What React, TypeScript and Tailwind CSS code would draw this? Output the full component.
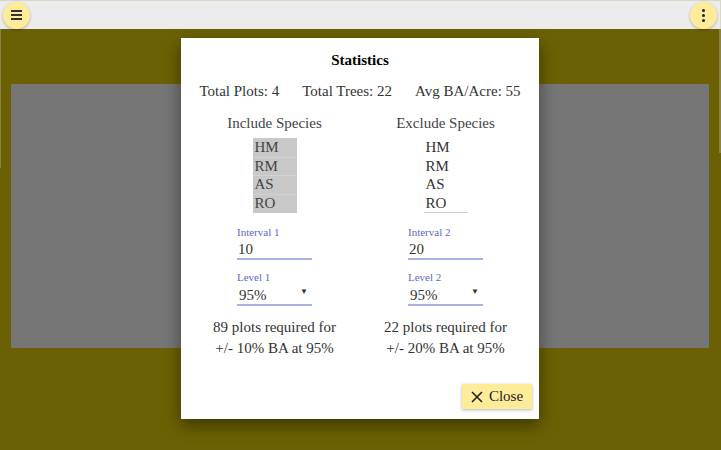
import React from "react";

const species = ["HM", "RM", "AS", "RO"];

type Col = {
  title: string;
  shaded: boolean;
  interval: string;
  intervalLabel: string;
  level: string;
  levelLabel: string;
  plots: number;
  pct: string;
};

const cols: Col[] = [
  { title: "Include Species", shaded: true, interval: "10", intervalLabel: "Interval 1", level: "95%", levelLabel: "Level 1", plots: 89, pct: "10%" },
  { title: "Exclude Species", shaded: false, interval: "20", intervalLabel: "Interval 2", level: "95%", levelLabel: "Level 2", plots: 22, pct: "20%" },
];

const StatColumn: React.FC<{ col: Col }> = ({ col }) => (
  <div className="flex flex-col items-center">
    <div className="text-[15px] leading-[20px] text-[#444]">{col.title}</div>
    <div
      className={
        col.shaded
          ? "mt-[5px] w-[44px] bg-[#c8c8c8] border-b border-[#c8c8c8] text-[#444]"
          : "mt-[5px] w-[44px] border-b border-[#cfcfcf] text-[#333]"
      }
    >
      {species.map((s, i) => (
        <div
          key={s}
          className={
            "pl-[2px] text-[15px] " +
            (col.shaded && i > 0 ? "border-t border-[#d2d2d2] leading-[17.5px]" : "leading-[18.5px]")
          }
        >
          {s}
        </div>
      ))}
    </div>
    <div className="w-[75px] mt-[12px]">
      <div className="text-[11px] leading-[14px] text-[#5c6bc0]">{col.intervalLabel}</div>
      <div className="mt-[1px] text-[15px] leading-[18px] text-[#333] pl-[1px] border-b-2 border-[#a9b2e4]">
        {col.interval}
      </div>
      <div className="mt-[10px] text-[11px] leading-[14px] text-[#5c6bc0]">{col.levelLabel}</div>
      <div className="mt-[2px] flex items-center justify-between text-[15px] leading-[18px] text-[#333] pl-[2px] pr-[4px] border-b-2 border-[#a9b2e4]">
        <span>{col.level}</span>
        <span className="text-[8px] leading-[18px] -mt-[6px]">▼</span>
      </div>
    </div>
    <div className="mt-[11px] text-center text-[15px] leading-[21px] text-[#333]">
      <div>{col.plots} plots required for</div>
      <div>+/- {col.pct} BA at {col.level}</div>
    </div>
  </div>
);

export default function App() {
  return (
    <div className="relative w-[721px] h-[450px] overflow-hidden font-['Liberation_Serif',serif]">
      <header className="h-[29px] bg-[#ececec] border-t border-r border-[#d8d8c6] flex items-center justify-between px-[3px]">
        <button className="w-[27px] h-[27px] rounded-full bg-[#ffeb99] shadow-[0_1px_3px_rgba(0,0,0,0.25)] flex flex-col items-center justify-center gap-[2px]">
          <span className="block w-[11px] h-[2px] bg-[#333]" />
          <span className="block w-[11px] h-[2px] bg-[#333]" />
          <span className="block w-[11px] h-[2px] bg-[#333]" />
        </button>
        <button className="w-[27px] h-[27px] rounded-full bg-[#ffeb99] shadow-[0_1px_3px_rgba(0,0,0,0.25)] flex flex-col items-center justify-center gap-[2px]">
          <span className="block w-[3px] h-[3px] rounded-full bg-[#222]" />
          <span className="block w-[3px] h-[3px] rounded-full bg-[#222]" />
          <span className="block w-[3px] h-[3px] rounded-full bg-[#222]" />
        </button>
      </header>
      <main className="h-[421px] bg-[#6b6104] flex justify-between">
        <div className="w-[1px] h-[139px] bg-[#8a8243]" />
        <div className="mt-[55px] w-[698px] h-[264px] bg-[#767676]" />
        <div className="w-[2px] h-[124px] bg-[#8a8243]" />
      </main>

      <div className="absolute left-[181px] top-[38px] w-[358px] h-[381px] bg-white shadow-[0_6px_16px_rgba(0,0,0,0.45)] px-[8px] pt-[12px] flex flex-col">
        <h2 className="text-center text-[15px] leading-[20px] font-bold text-black">Statistics</h2>
        <div className="mt-[11px] flex justify-center gap-[23px] text-[15px] leading-[20px] text-[#333]">
          <span>Total Plots: 4</span>
          <span>Total Trees: 22</span>
          <span>Avg BA/Acre: 55</span>
        </div>
        <div className="mt-[12px] grid grid-cols-2">
          {cols.map(c => (
            <StatColumn key={c.title} col={c} />
          ))}
        </div>
        <div className="mt-auto mb-[10px] -mr-[1px] flex justify-end">
          <button className="h-[25px] w-[70px] bg-[#ffec99] shadow-[0_1px_3px_rgba(0,0,0,0.3)] flex items-center justify-center gap-[6px] text-[15px] text-[#222]">
            <svg width="12" height="12" viewBox="0 0 12 12">
              <path d="M1 1 L11 11 M11 1 L1 11" stroke="#222" strokeWidth="1.6" />
            </svg>
            <span>Close</span>
          </button>
        </div>
      </div>
    </div>
  );
}
